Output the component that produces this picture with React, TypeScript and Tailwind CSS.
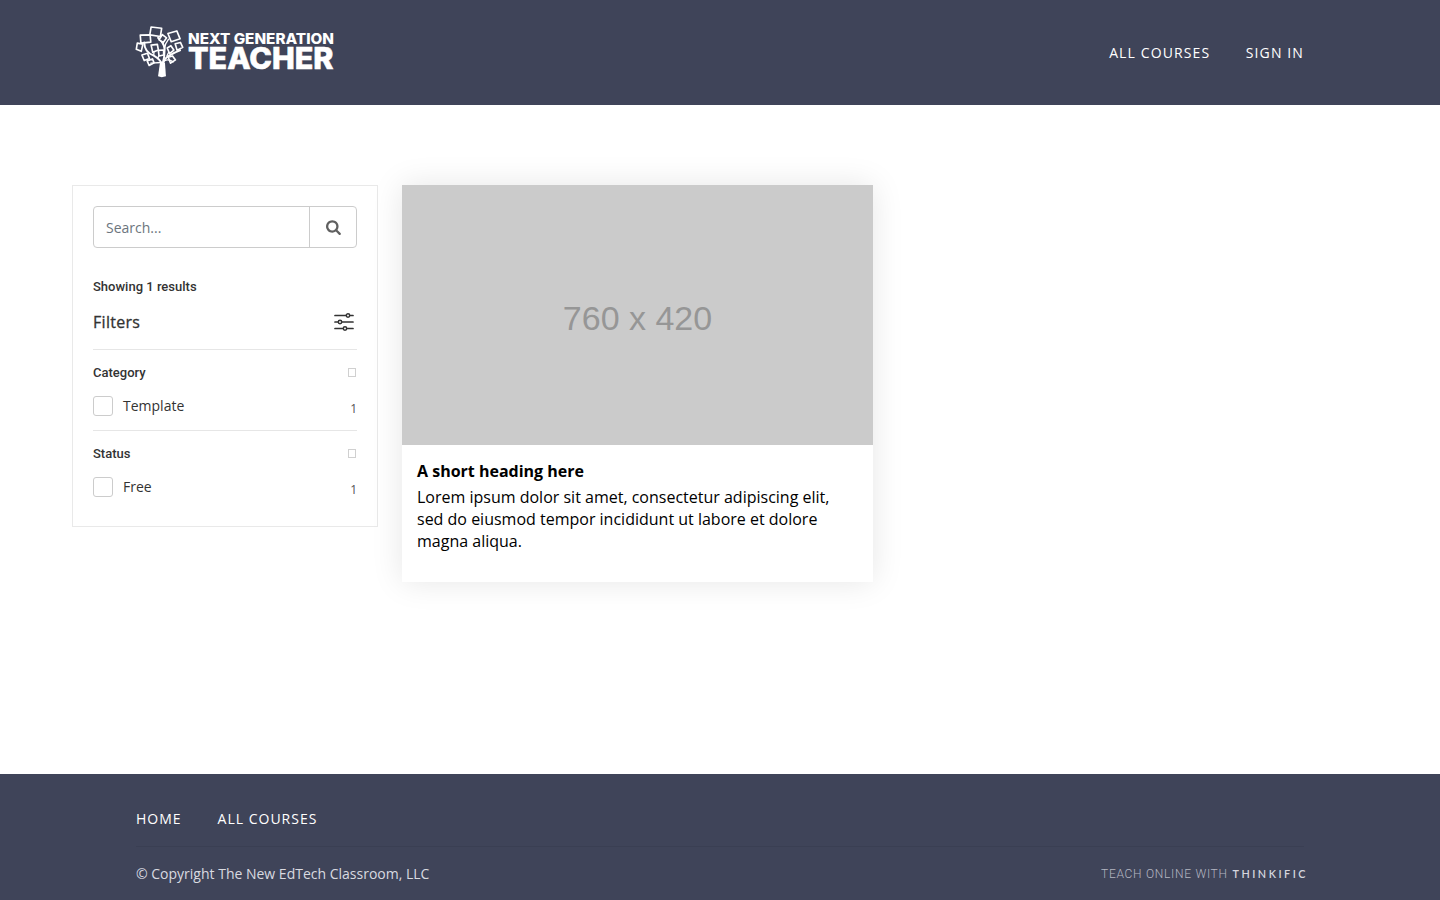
function TreeMark() {
  return (
    <svg viewBox="0 0 156 164" className="h-[54px] w-[52px] shrink-0" fill="none" stroke="white" strokeWidth="4.2" strokeLinejoin="round" strokeLinecap="round">
      <path d="M75 117 69 159Q80 164 93 159L90 117Z" fill="white" stroke="none" />
      <g strokeWidth="6">
        <path d="M82 126Q78 108 56 96Q28 86 27 56" />
        <path d="M83 122Q89 103 89 76Q87 57 69 42" />
        <path d="M83 122Q88 103 104 95Q122 85 136 80" />
      </g>
      <g strokeWidth="4">
        <path d="M89 74Q90 60 101 46" />
        <path d="M79 117 47 119M88 112Q101 105 115 115M68 104 74 92M56 94 57 80M96 97 102 84" />
      </g>
      <g strokeWidth="5">
        <path d="M48 9 80 13 76 38 44 33Z" />
        <path d="M99 29 126 21 136 45 109 54Z" />
        <path d="M15 34 45 33 47 55 17 58Z" />
        <path d="M6 58 23 61 18 83 3 77Z" />
        <path d="M72 48 82 32 95 42 85 56Z" fill="#3f4459" />
        <path d="M48 64 67 62 70 79 53 86Z" fill="#3f4459" />
        <path d="M70 80 86 79 86 94 72 97Z" fill="#3f4459" />
        <path d="M97 73 108 66 117 79 104 90Z" fill="#3f4459" />
        <path d="M121 60 137 56 144 71 127 80Z" />
        <path d="M20 94 37 89 43 105 27 111Z" />
        <path d="M36 112 52 106 57 118 42 126Z" />
        <path d="M100 101 113 97 122 109 107 119Z" />
      </g>
    </svg>
  );
}

function Logo() {
  return (
    <a href="#" className="-ml-px flex h-[58px] w-[200px] items-start" aria-label="Next Generation Teacher">
      <TreeMark />
      <svg viewBox="0 0 147 54" className="h-[54px] w-[147px]" fill="white" fontFamily="Inter, Liberation Sans, sans-serif" fontWeight="800">
        <text x="1" y="20.2" fontSize="14.3" textLength="146" lengthAdjust="spacingAndGlyphs">NEXT GENERATION</text>
        <text x="1" y="45.3" fontSize="29.5" textLength="145.5" lengthAdjust="spacingAndGlyphs" stroke="white" strokeWidth=".6">TEACHER</text>
      </svg>
    </a>
  );
}

function SearchIcon() {
  return (
    <svg viewBox="0 0 1792 1792" className="ml-px size-4" fill="#606060">
      <path d="M1152 832q0-185-131.5-316.5t-316.5-131.5-316.5 131.5-131.5 316.5 131.5 316.5 316.5 131.5 316.5-131.5 131.5-316.5zm512 832q0 52-38 90t-90 38q-54 0-90-38l-343-342q-179 124-399 124-143 0-273.5-55.5t-225-150-150-225-55.5-273.5 55.5-273.5 150-225 225-150 273.5-55.5 273.5 55.5 225 150 150 225 55.5 273.5q0 220-124 399l343 343q37 37 37 90z" />
    </svg>
  );
}

function FiltersIcon() {
  return (
    <svg viewBox="0 0 20 20" className="mr-[3px] h-5 w-5" fill="none" stroke="#333" strokeWidth="1.7" strokeLinecap="round">
      <path d="M1 3.5h11M16 3.5h3M1 10h3M8 10h11M1 16.5h8M13 16.5h6" />
      <circle cx="14" cy="3.5" r="1.7" strokeWidth="1.5" />
      <circle cx="6" cy="10" r="1.7" strokeWidth="1.5" />
      <circle cx="11" cy="16.5" r="1.7" strokeWidth="1.5" />
    </svg>
  );
}

function FilterGroup({ title, option }: { title: string; option: string }) {
  return (
    <section className="h-[81px] border-t border-[#e6e6e6] pt-[13px]">
      <div className="flex h-5 items-center justify-between">
        <h3 className="font-[Roboto] text-[13px] font-medium text-[#333]">{title}</h3>
        <span className="mr-px mb-px h-[9px] w-2 border border-[#d0d0d0]" />
      </div>
      <label className="mt-[13px] flex h-5 items-center text-sm text-[#333]">
        <span className="mr-2.5 size-5 rounded-[3px] border border-[#ccc] bg-white" />
        {option}
        <span className="mt-[5px] ml-auto text-xs text-[#555]">1</span>
      </label>
    </section>
  );
}

export default function App() {
  return (
    <div className="flex h-[900px] flex-col overflow-hidden bg-white font-['Open_Sans',sans-serif]">
      <header className="flex h-[105px] shrink-0 items-center justify-between bg-[#3f4459] px-[136px]">
        <Logo />
        <nav className="flex gap-[35.5px] text-sm tracking-[1.12px] text-white">
          <a href="#">ALL COURSES</a>
          <a href="#">SIGN IN</a>
        </nav>
      </header>

      <main className="flex flex-1 items-start gap-6 px-[72px] pt-20">
        <aside className="h-[342px] w-[306px] border border-[#e9e9e9] px-5 pt-5">
          <form className="flex h-[42px] rounded-[4px] border border-[#ccc]">
            <input type="text" placeholder="Search..." className="min-w-0 flex-1 px-3 pt-0.5 text-sm text-[#333] outline-none placeholder:text-[#6c757d]" />
            <button type="button" aria-label="Search" className="flex w-[47px] items-center justify-center border-l border-[#ccc]">
              <SearchIcon />
            </button>
          </form>
          <p className="mt-[29px] font-[Roboto] text-[13px] leading-5 font-medium text-[#333]">Showing 1 results</p>
          <div className="mt-[13px] flex h-[24px] items-center justify-between">
            <h2 className="text-base font-medium tracking-[0.3px] text-[#333] [-webkit-text-stroke:0.3px_#333]">Filters</h2>
            <FiltersIcon />
          </div>
          <div className="mt-[15px]">
            <FilterGroup title="Category" option="Template" />
            <FilterGroup title="Status" option="Free" />
          </div>
        </aside>

        <article className="h-[397px] w-[471px] bg-white shadow-[0_0_30px_rgba(0,0,0,0.1)]">
          <div className="flex h-[260px] items-center justify-center bg-[#cbcbcb] pt-[7px] font-['Liberation_Sans',sans-serif] text-[34px] text-[#969696]">
            760 x 420
          </div>
          <div className="px-[15px] pt-[15px] text-base leading-[22px] text-black">
            <h2 className="font-bold">A short heading here</h2>
            <p className="mt-1">Lorem ipsum dolor sit amet, consectetur adipiscing elit, sed do eiusmod tempor incididunt ut labore et dolore magna aliqua.</p>
          </div>
        </article>
      </main>

      <footer className="h-[126px] shrink-0 bg-[#3f4459] px-[136px] pt-[35px]">
        <nav className="flex gap-9 text-sm tracking-[1px] text-white">
          <a href="#">HOME</a>
          <a href="#">ALL COURSES</a>
        </nav>
        <div className="mt-[17px] flex h-[55px] items-center justify-between border-t border-[#3a3f53] text-sm text-[#d9dae0]">
          <p>© Copyright The New EdTech Classroom, LLC</p>
          <svg viewBox="0 0 205 20" className="-mr-0.5 h-5 w-[205px]">
            <text x="0" y="14" fontFamily="Roboto, sans-serif" fontSize="12" fill="#b4b6c1" textLength="126" fontWeight="300">TEACH ONLINE WITH</text>
            <text x="131.5" y="13.5" fontFamily="Lato, sans-serif" fontSize="10.8" fontWeight="600" fill="#d5d6de" textLength="73">THINKIFIC</text>
          </svg>
        </div>
      </footer>
    </div>
  );
}
